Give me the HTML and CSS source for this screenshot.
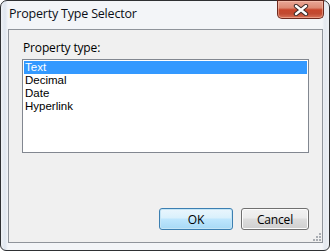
FILE: index.html
```html
<!DOCTYPE html>
<html>
<head>
    <title>Property Type Selector</title>
    <link rel="stylesheet" href="styles.css">
</head>
<body>
    <div class="window">
        <div class="titlebar">
            <span class="title">Property Type Selector</span>
            <button class="close">
                <svg width="16" height="12" viewBox="0 0 16 12">
                    <path d="M3 2 L13 10 M13 2 L3 10" stroke="#3a2a28" stroke-width="4.4" stroke-linecap="round" fill="none" />
                    <path d="M3 2 L13 10 M13 2 L3 10" stroke="#ffffff" stroke-width="2.4" stroke-linecap="round" fill="none" />
                </svg>
            </button>
        </div>
        <div class="client">
            <div class="label">Property type:</div>
            <ul class="list">
                <li class="selected">Text</li>
                <li>Decimal</li>
                <li>Date</li>
                <li>Hyperlink</li>
            </ul>
            <div class="buttons">
                <button class="btn default">OK</button>
                <button class="btn cancel">Cancel</button>
            </div>
            <span class="grip"></span>
        </div>
    </div>
</body>
</html>
```

FILE: styles.css
```css
body {
    margin: 0;
    background: #ffffff;
    font: 12px "Open Sans", "Noto Sans", sans-serif;
    color: #000000;
}

.window {
    box-sizing: border-box;
    width: 330px;
    height: 251px;
    border: 1px solid #2e3033;
    border-radius: 7px 7px 6px 6px;
    padding: 0 6px 7px 7px;
    display: flex;
    flex-direction: column;
    background: linear-gradient(90deg, #eef1f5 0px, #dfe6ef 4px, #f3f5f8 7px, #f3f5f8 calc(100% - 7px), #e3e8ef calc(100% - 4px), #eef1f5 100%);
}

.titlebar {
    height: 28px;
    display: flex;
    justify-content: space-between;
    align-items: flex-start;
}

.title {
    padding: 4px 0 0 1px;
    font-size: 12.5px;
    letter-spacing: -0.2px;
    color: #0b0f17;
}

.close {
    width: 47px;
    height: 19px;
    margin-top: -1px;
    margin-right: -1px;
    padding: 0;
    border: 1px solid #6e2a1f;
    border-top-color: #5a2219;
    border-radius: 0 0 5px 5px;
    background: linear-gradient(180deg, #e9a797 0%, #dd8a74 40%, #c8462c 52%, #c14a31 75%, #d8735a 100%);
    box-shadow: inset 0 0 0 1px rgba(255, 210, 190, 0.45);
    display: flex;
    justify-content: center;
    align-items: center;
}

.client {
    position: relative;
    flex: 1;
    border: 1px solid #8f949b;
    background: #f0f0f0;
    display: flex;
    flex-direction: column;
    padding: 9px 13px 12px 13px;
}

.label {
    padding-left: 1px;
    line-height: 17px;
    margin-bottom: 3px;
    font-size: 12px;
    letter-spacing: -0.15px;
}

.list {
    margin: 0;
    padding: 1px;
    list-style: none;
    height: 90px;
    border: 1px solid #828790;
    background: #ffffff;
    font: 11.5px "Liberation Sans", Arial, sans-serif;
}

.list li {
    height: 13px;
    line-height: 13px;
    padding-left: 1px;
}

.list li.selected {
    background: #3399ff;
    color: #ffffff;
}

.buttons {
    margin-top: auto;
    display: flex;
    justify-content: flex-end;
    gap: 8px;
}

.btn {
    height: 22px;
    padding: 0;
    font: 12px "Open Sans", "Noto Sans", sans-serif;
    letter-spacing: -0.15px;
    color: #000000;
    border-radius: 3px;
}

.btn.default {
    width: 74px;
    border: 1px solid #3c7fb1;
    background: linear-gradient(180deg, #eaf6fd 0%, #d9f0fc 45%, #bee6fd 50%, #a7d9f5 100%);
    box-shadow: inset 0 0 0 1px #c4e5f6;
}

.btn.cancel {
    width: 68px;
    border: 1px solid #707070;
    background: linear-gradient(180deg, #f2f2f2 0%, #ebebeb 45%, #dddddd 50%, #cfcfcf 100%);
    box-shadow: inset 0 0 0 1px #fcfcfc;
}

.grip {
    position: absolute;
    right: 1px;
    bottom: 1px;
    width: 8px;
    height: 8px;
    background:
        radial-gradient(circle, #a9adb3 0.8px, transparent 1.2px) 6px 0 / 2px 2px no-repeat,
        radial-gradient(circle, #a9adb3 0.8px, transparent 1.2px) 6px 3px / 2px 2px no-repeat,
        radial-gradient(circle, #a9adb3 0.8px, transparent 1.2px) 3px 3px / 2px 2px no-repeat,
        radial-gradient(circle, #a9adb3 0.8px, transparent 1.2px) 6px 6px / 2px 2px no-repeat,
        radial-gradient(circle, #a9adb3 0.8px, transparent 1.2px) 3px 6px / 2px 2px no-repeat,
        radial-gradient(circle, #a9adb3 0.8px, transparent 1.2px) 0 6px / 2px 2px no-repeat;
}
```
